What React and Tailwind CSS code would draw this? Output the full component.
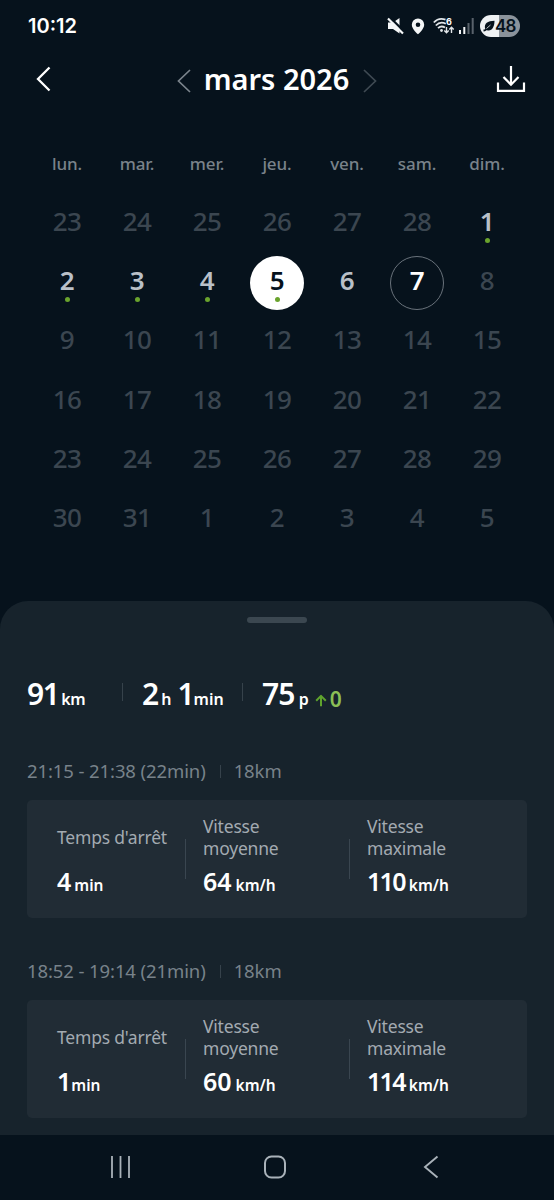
import React, { useState } from 'react';

const weekDays = ['lun.', 'mar.', 'mer.', 'jeu.', 'ven.', 'sam.', 'dim.'];

const off = (n) => ({ day: n, state: 'off' });
const trip = (n) => ({ day: n, state: 'on', dot: true });

const days = [
    ...[23, 24, 25, 26, 27, 28].map(off),
    ...[1, 2, 3, 4, 5].map(trip),
    { day: 6, state: 'on' },
    { day: 7, state: 'today' },
    ...Array.from({ length: 24 }, (_, i) => off(i + 8)),
    ...[1, 2, 3, 4, 5].map(off),
];

const FIRST_DAY = 6;

const trips = [
    { time: '21:15 - 21:38 (22min)', distance: '18km', stop: '4', average: '64', max: '110' },
    { time: '18:52 - 19:14 (21min)', distance: '18km', stop: '1', average: '60', max: '114' },
];

const dayColors = {
    off: 'text-[#3b4650]',
    on: 'text-[#b9c0c8]',
    today: 'text-white border border-[#69727b]',
    selected: 'text-[#06121c] bg-white',
};

const StatusBar = () => (
    <div className="flex h-[52px] items-center justify-between pl-[28px] pr-[34px]">
        <span className="font-['Inter'] text-[20px] font-semibold leading-none">10:12</span>
        <div className="flex items-center">
            <svg width="17" height="18" viewBox="0 0 17 18" className="mr-[7px]">
                <path d="M1 5.500h5L12.500 1v15.500L6 12H1z" fill="#f4f6f7" />
                <path d="M2.500 0l16 16" stroke="#06121c" strokeWidth="2.400" />
                <path d="M1 1.500l15 15" stroke="#f4f6f7" strokeWidth="2.200" />
            </svg>
            <svg width="14" height="17" viewBox="0 0 14 17" className="mr-[8px]">
                <path
                    fillRule="evenodd"
                    d="M7 .5a6.200 6.200 0 0 0-6.200 6.200C.8 11 7 16.300 7 16.300S13.200 11 13.200 6.700A6.200 6.200 0 0 0 7 .5zm0 4a2.300 2.300 0 1 1 0 4.600 2.300 2.300 0 0 1 0-4.600z"
                    fill="#f4f6f7"
                />
            </svg>
            <div className="relative mr-[4px] h-[18px] w-[22px]">
                <svg width="22" height="18" viewBox="0 0 22 18" fill="none" stroke="#e2e6e9" strokeWidth="1.800">
                    <path d="M.8 5.500C4 2 8.500 1.200 12.500 2.600" />
                    <path d="M2.800 8.500C5.500 5.700 9.500 5 12.800 6.800" />
                    <path d="M5 11.200c2-1.900 4.800-2.100 7-.6" />
                    <circle cx="8.500" cy="13.500" r="1.400" fill="#e2e6e9" stroke="none" />
                    <path d="M13.500 10v5.500M11.300 13.500l2.200 2.300 2.200-2.300M18.500 16v-5.500M16.300 12.500l2.200-2.300 2.200 2.300" strokeWidth="1.400" />
                </svg>
                <span className="absolute left-[13px] top-0 font-['Inter'] text-[9px] font-bold leading-[9px]">6</span>
            </div>
            <svg width="15" height="16" viewBox="0 0 15 16" className="mr-[6px]">
                <path d="M0 12h2v4H0zM4.300 9h2v7h-2z" fill="#f4f6f7" />
                <path d="M8.500 5h2v11h-2zM12.700 0h2v16h-2z" fill="#59626b" />
            </svg>
            <div className="flex h-[22px] w-[40px] items-center rounded-full bg-gradient-to-r from-[#eef1f3] from-48% to-[#8b939b] to-48% pl-[3px] text-[#06121c]">
                <svg width="12" height="12" viewBox="0 0 12 12">
                    <path d="M2 8.500C1 3.500 4.500 1 11.500.8 11.500 7.500 8.500 11.500 4 10.200z" fill="#06121c" />
                    <path d="M.5 10.500C3 10.300 5 8 7.500 5.500" fill="none" stroke="#06121c" strokeWidth="1.800" />
                    <path d="M3.500 8.500L7.500 5" stroke="#eef1f3" strokeWidth=".8" />
                </svg>
                <span className="font-['Inter'] text-[17px] font-semibold leading-none tracking-[-0.8px]">48</span>
            </div>
        </div>
    </div>
);

const Chevron = ({ flip, className }) => (
    <svg width="14" height="24" viewBox="0 0 14 24" fill="none" stroke="currentColor" className={className}>
        <path d={flip ? 'M1 1l11.500 11L1 23' : 'M13 1L1.500 12 13 23'} strokeWidth="1.700" />
    </svg>
);

const Header = () => (
    <div className="flex h-[54px] items-center justify-between pl-[36px] pr-[28px]">
        <button>
            <svg width="15" height="26" viewBox="0 0 15 26" fill="none" stroke="white" strokeWidth="2.300">
                <path d="M13.500 1.500L2 13l11.500 11.500" />
            </svg>
        </button>
        <div className="flex items-center pl-[6px]">
            <Chevron className="mt-[3px] text-[#7b848c]" />
            <h1 className="w-[172px] text-center text-[29px] font-semibold leading-[40px]">mars 2026</h1>
            <Chevron flip className="mt-[3px] text-[#3f4a53]" />
        </div>
        <button>
            <svg width="30" height="28" viewBox="0 0 30 28" fill="none" stroke="white" strokeWidth="2.200">
                <path d="M15 1v18.500M7.500 12l7.500 7.700 7.500-7.700M2 17.500v8.400h26v-8.400" />
            </svg>
        </button>
    </div>
);

const Calendar = ({ selected, onSelect }) => (
    <div className="px-[32px] pt-[43px]">
        <div className="grid grid-cols-7">
            {weekDays.map((name) => (
                <div key={name} className="h-[45px] text-center text-[17px] font-medium leading-[30px] tracking-[-0.1px] text-[#79828a]">
                    {name}
                </div>
            ))}
        </div>
        <div className="grid auto-rows-[59.300px] grid-cols-7">
            {days.map((item, index) => (
                <div key={index} className="flex items-center justify-center">
                    <button
                        onClick={() => item.state !== 'off' && onSelect(index)}
                        className={`box-border flex h-[54px] w-[54px] flex-col items-center rounded-full ${dayColors[index === selected ? 'selected' : item.state]}`}
                    >
                        <span className={`h-[34px] text-[26px] leading-[34px] tracking-[-0.6px] ${item.state === 'today' ? 'mt-[6px]' : 'mt-[7px]'} ${item.state === 'off' ? 'font-medium' : 'font-semibold'}`}>
                            {item.day}
                        </span>
                        {item.dot && <span className="h-[5px] w-[5px] rounded-full bg-[#6aa32d]" />}
                    </button>
                </div>
            ))}
        </div>
    </div>
);

const Summary = () => (
    <div className="flex h-[44px] items-baseline pl-[27px] text-[30px] font-semibold leading-[44px]">
        <div className="w-[95px]">
            <span className="tracking-[-1.500px]">91</span>
            <span className="ml-[3px] text-[16px] tracking-[-0.4px]">km</span>
        </div>
        <div className="mb-[5px] h-[18px] w-px self-center bg-[#36424b]" />
        <div className="w-[119px] pl-[19px]">
            2<span className="ml-[2px] mr-[6px] text-[16px]">h</span>1
            <span className="-ml-px text-[16px]">min</span>
        </div>
        <div className="mb-[5px] h-[18px] w-px self-center bg-[#36424b]" />
        <div className="pl-[19px]">
            <span className="tracking-[-0.8px]">75</span>
            <span className="ml-[4px] text-[16px]">p</span>
        </div>
        <div className="flex translate-y-[1.500px] items-baseline text-[#8bbf56]">
            <svg width="12" height="12" viewBox="0 0 12 12" fill="none" stroke="#5fa32d" strokeWidth="2" className="ml-[6px] mr-[3px]">
                <path d="M6 12V1.500M1.200 6.200L6 1.400l4.800 4.800" />
            </svg>
            <span className="text-[21px]">0</span>
        </div>
    </div>
);

const Metric = ({ label, value, unit, className, valueClassName = '' }) => (
    <div className={`flex flex-col ${className}`}>
        <div className="flex h-[44px] items-center text-[17.500px] leading-[22px] tracking-[-0.2px] text-[#a3aab1]">
            <span>{label}</span>
        </div>
        <div className="mt-[4px] flex h-[36px] items-baseline text-[25px] font-semibold leading-[36px]">
            <span className={valueClassName}>{value}</span>
            <span className="ml-[4px] text-[15.500px]">{unit}</span>
        </div>
    </div>
);

const Separator = () => <div className="mt-[39px] h-[40px] w-px bg-[#3a4650]" />;

const TripCard = ({ trip }) => (
    <div className="mb-[38px]">
        <div className="flex h-[44px] items-center pb-[14px] text-[18.500px] leading-[30px] tracking-[-0.1px] text-[#78828a]">
            <span>{trip.time}</span>
            <span className="ml-[14px] mr-[13px] h-[13px] w-px bg-[#36424b]" />
            <span>{trip.distance}</span>
        </div>
        <div className="flex h-[118px] rounded-[5px] bg-[#212c35]">
            <Metric
                label="Temps d'arrêt"
                value={trip.stop}
                unit="min"
                className="w-[158px] pl-[30px] pt-[15px]"
                valueClassName={trip.stop === '1' ? '-mr-[4px]' : '-mr-px'}
            />
            <Separator />
            <Metric label={<>Vitesse<br />moyenne</>} value={trip.average} unit="km/h" className="w-[163px] pl-[17px] pt-[15px]" />
            <Separator />
            <Metric
                label={<>Vitesse<br />maximale</>}
                value={trip.max}
                unit="km/h"
                className="pl-[17px] pt-[15px]"
                valueClassName="tracking-[-1.700px]"
            />
        </div>
    </div>
);

const NavBar = () => (
    <div className="flex h-[65px] items-center justify-between bg-[#06121c] pb-[2px] pl-[110px] pr-[115px] text-[#a9b2b9]">
        <svg width="22" height="22" viewBox="0 0 22 22" stroke="currentColor" strokeWidth="1.800">
            <path d="M2 0v22M10.500 0v22M19 0v22" />
        </svg>
        <svg width="22" height="24" viewBox="0 0 22 24" fill="none" stroke="currentColor" strokeWidth="2" className="mr-[5px]">
            <rect x="1" y="1.500" width="20" height="21" rx="6.500" />
        </svg>
        <svg width="16" height="24" viewBox="0 0 16 24" fill="none" stroke="currentColor" strokeWidth="1.900">
            <path d="M14.500 1.500L2 12l12.500 10.500" />
        </svg>
    </div>
);

const App = () => {
    const [selected, setSelected] = useState(FIRST_DAY + 4);

    return (
        <div className="flex h-[1200px] w-[554px] flex-col overflow-hidden bg-[#06121c] font-['Noto_Sans',sans-serif] text-white">
            <StatusBar />
            <Header />
            <Calendar selected={selected} onSelect={setSelected} />
            <div className="mt-auto h-[534px] shrink-0 overflow-hidden rounded-t-[28px] bg-[#17232c]">
                <div className="mx-auto mt-[16px] h-[6px] w-[60px] rounded-full bg-[#3b4750]" />
                <div className="pt-[49px]">
                    <Summary />
                </div>
                <div className="px-[27px] pt-[40px]">
                    {trips.map((trip) => (
                        <TripCard key={trip.time} trip={trip} />
                    ))}
                </div>
            </div>
            <NavBar />
        </div>
    );
};

export default App;
